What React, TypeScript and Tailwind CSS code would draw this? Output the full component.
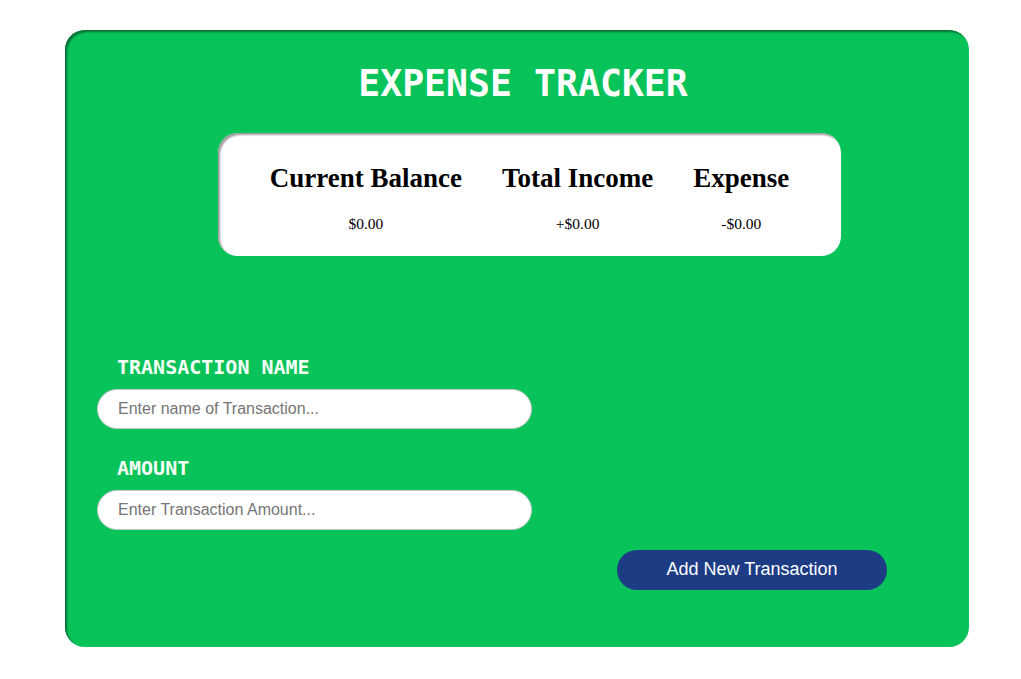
export default function App() {
  const mono = "font-['DejaVu_Sans_Mono',monospace]";
  return (
    <div className="min-h-screen bg-white pt-[30px]">
      <div className="ml-[65px] w-[904px] h-[617px] rounded-[20px] bg-[#08c35a] shadow-[inset_2px_2px_2px_#0b6e35] flex flex-col">
        <h1 className={`${mono} font-bold text-[36.5px] leading-none text-white text-center mt-[36px] pl-[12px]`}>
          EXPENSE TRACKER
        </h1>

        <div className="ml-[153px] mt-[30px] w-[623px] h-[123px] rounded-[20px] bg-white shadow-[inset_2px_2px_2px_#9c9c9c] flex justify-center gap-[40px] font-['Liberation_Serif',serif] text-black">
          <div className="flex flex-col items-center">
            <h2 className="font-bold text-[27px] leading-none mt-[32px]">Current Balance</h2>
            <p className="text-[15.5px] mt-[20px]">$0.00</p>
          </div>
          <div className="flex flex-col items-center">
            <h2 className="font-bold text-[27px] leading-none mt-[32px]">Total Income</h2>
            <p className="text-[15.5px] mt-[20px]">+$0.00</p>
          </div>
          <div className="flex flex-col items-center">
            <h2 className="font-bold text-[27px] leading-none mt-[32px]">Expense</h2>
            <p className="text-[15.5px] mt-[20px]">-$0.00</p>
          </div>
        </div>

        <form className="flex flex-col pl-[32px] mt-[101px]">
          <label className={`${mono} font-bold text-[20px] leading-none text-[#f4fff6] pl-[20px]`}>
            TRANSACTION NAME
          </label>
          <input
            className="mt-[12px] w-[435px] h-[40px] rounded-full bg-white border border-[#c8c8c8] px-[20px] font-['Liberation_Sans',sans-serif] text-[16px] placeholder:text-[#757575] outline-none"
            placeholder="Enter name of Transaction..."
          />
          <label className={`${mono} font-bold text-[20px] leading-none text-[#f4fff6] pl-[20px] mt-[29px]`}>
            AMOUNT
          </label>
          <input
            className="mt-[12px] w-[435px] h-[40px] rounded-full bg-white border border-[#c8c8c8] px-[20px] font-['Liberation_Sans',sans-serif] text-[16px] placeholder:text-[#757575] outline-none"
            placeholder="Enter Transaction Amount..."
          />
          <button
            type="button"
            className="ml-[520px] mt-[20px] w-[270px] h-[40px] rounded-full bg-[#1d3c84] text-white font-['Liberation_Sans',sans-serif] text-[18px]"
          >
            Add New Transaction
          </button>
        </form>
      </div>
    </div>
  );
}
